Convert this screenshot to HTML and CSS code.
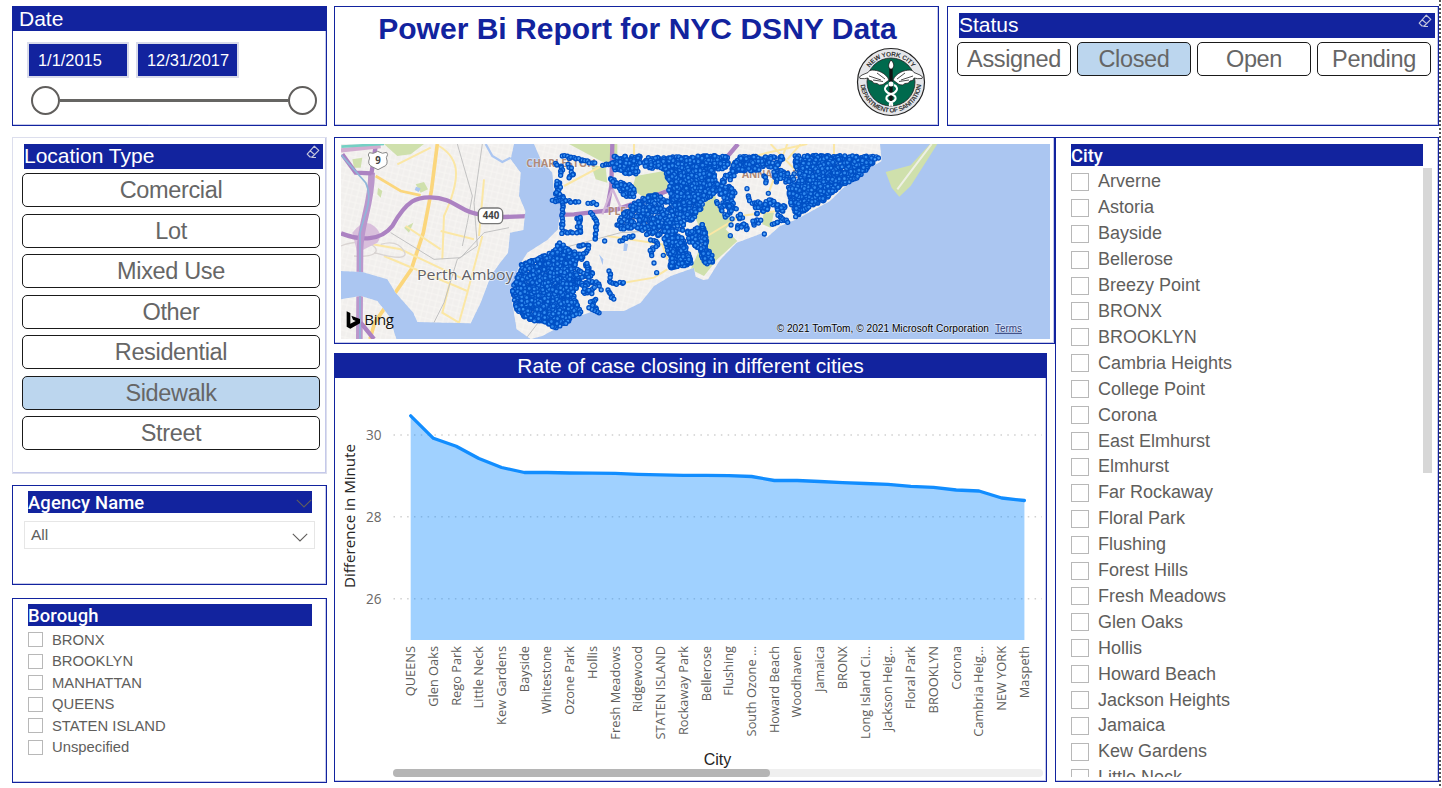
FILE: index.html
```html
<!DOCTYPE html>
<html lang="en">
<head>
<meta charset="utf-8">
<title>Power Bi Report for NYC DSNY Data</title>
<link rel="stylesheet" href="styles.css">
</head>
<body>
<svg class="defs" width="0" height="0">
  <symbol id="eraser" viewBox="0 0 14 14">
    <path d="M8.3 1.2 12.8 5.4 6.2 12 4 12 1.2 9.2Z M4.2 5.8 8.8 9.9 M5.5 12.5H10" fill="none" stroke="#c3c5dc" stroke-width="1.2" stroke-linejoin="round"/>
  </symbol>
  <symbol id="chevron" viewBox="0 0 16 9">
    <path d="M.8 .8 8 8 15.2 .8" fill="none" stroke="#605e5c" stroke-width="1.1"/>
  </symbol>
</svg>
<div class="report">
  <div class="top">
    <section class="card date">
      <h2 class="bar bar-date">Date</h2>
      <div class="dates"><span class="date-box">1/1/2015</span><span class="date-box end">12/31/2017</span></div>
      <div class="slider"><i class="knob"></i><i class="track"></i><i class="knob"></i></div>
    </section>
    <section class="card title">
      <h1>Power Bi Report for NYC DSNY Data</h1>
      <svg class="seal" viewBox="-35 -35 70 70">
        <defs>
          <path id="arcTop" d="M-25.6 0A25.6 25.6 0 0 1 25.6 0"/>
          <path id="arcBottom" d="M-30.4 0A30.4 30.4 0 0 0 30.4 0"/>
        </defs>
        <circle r="33.5" fill="#e6e7ea" stroke="#222" stroke-width="1.2"/>
        <circle r="24" fill="#006a4d" stroke="#222" stroke-width=".8"/>
        <text class="seal-text"><textPath href="#arcTop" startOffset="50%" text-anchor="middle" textLength="50">NEW YORK CITY</textPath></text>
        <text class="seal-text"><textPath href="#arcBottom" startOffset="50%" text-anchor="middle" textLength="90">DEPARTMENT OF SANITATION</textPath></text>
        <g fill="#fff" stroke="#222" stroke-width=".8" stroke-linejoin="round">
          <path d="M-2-2C-5-9-13-12-19-12Q-22-12-23-9.500L-29-7Q-33-5-31-3.500Q-26-3-23-4Q-23-1-19-1Q-18 2-14 1.500Q-12 4-8 2.500Z"/>
          <path d="M2-2C5-9 13-12 19-12Q22-12 23-9.500L29-7Q33-5 31-3.500Q26-3 23-4Q23-1 19-1Q18 2 14 1.500Q12 4 8 2.500Z"/>
          <path d="M-22-6-10-2M-18-2-8-.500M-14-9-6-3M22-6 10-2M18-2 8-.500M14-9 6-3" fill="none"/>
        </g>
        <path d="M0-15V24" stroke="#111" stroke-width="3.400"/>
        <path d="M0-22C4-18 3-15 1-13H-1C-3-15-3-18 0-22Z" fill="#fff" stroke="#111" stroke-width=".8"/>
        <path d="M-3 3C-9 6-5 11 0 12C6 14 6 18 1 20Q-2 21-1 24M3 3C9 6 5 11 0 12C-6 14-6 18-1 20Q2 21 1 24" fill="none" stroke="#fff" stroke-width="2"/>
        <circle cy="2" r="2.500" fill="#fff"/>
      </svg>
    </section>
    <section class="card status">
      <h2 class="bar bar-slicer">Status<svg class="eraser"><use href="#eraser"/></svg></h2>
      <div class="status-row"><button class="pick">Assigned</button><button class="pick on">Closed</button><button class="pick">Open</button><button class="pick">Pending</button></div>
    </section>
  </div>
  <div class="main">
    <div class="left">
      <section class="card location">
        <h2 class="bar bar-slicer">Location Type<svg class="eraser"><use href="#eraser"/></svg></h2>
        <div class="picks">
          <button class="pick">Comercial</button><button class="pick">Lot</button><button class="pick">Mixed Use</button><button class="pick">Other</button><button class="pick">Residential</button><button class="pick on">Sidewalk</button><button class="pick">Street</button>
        </div>
      </section>
      <section class="card agency">
        <h2 class="bar bar-din">Agency Name<svg class="chev"><use href="#chevron"/></svg></h2>
        <div class="select">All<svg class="chev"><use href="#chevron"/></svg></div>
      </section>
      <section class="card borough">
        <h2 class="bar bar-din">Borough</h2>
        <ul class="checks small"><li>BRONX</li><li>BROOKLYN</li><li>MANHATTAN</li><li>QUEENS</li><li>STATEN ISLAND</li><li>Unspecified</li></ul>
      </section>
    </div>
    <div class="center">
      <section class="card map">
        <svg class="map-svg" viewBox="21 24 2127 585" preserveAspectRatio="none">
          <defs>
            <clipPath id="land">
              <path id="west" d="M21 24H540L530 70 560 110 555 180 574 225 568 282 528 290 522 350 495 385 470 420 440 500 410 562 250 558 238 530 185 470 160 430 85 408 21 405Z"/>
              <path id="southwest" d="M21 490 80 480 130 495 165 540 187 609H21Z"/>
              <path id="island" d="M600 24 620 70 655 110 660 170 682 190 672 280 640 312 580 350 555 390 530 470 548 580 590 609 625 600 680 570 720 545 780 525 870 525 920 500 960 450 1010 420 1080 395 1085 422 1108 432 1122 430 1158 372 1208 320 1288 290 1298 305 1338 270 1388 250 1488 195 1528 155 1568 130 1608 95 1643 75 1638 24Z"/>
            </clipPath>
            <pattern id="streets" width="34" height="38" patternUnits="userSpaceOnUse" patternTransform="rotate(14)">
              <path d="M0 8H34M0 27H34M9 0V38M25 0V38" stroke="#f8f6f4" stroke-width="2.500" fill="none"/>
            </pattern>
          </defs>
          <rect x="21" y="24" width="2127" height="585" fill="#abc6f1"/>
          <g clip-path="url(#land)">
            <rect x="21" y="24" width="2127" height="585" fill="#f1efed"/>
            <rect x="21" y="24" width="2127" height="585" fill="url(#streets)"/>
            <g fill="#cfe0ac">
              <path d="M150 24H270L230 55 190 60Z"/><path d="M245 145 270 138 282 160 260 170Z"/><path d="M210 275 238 260 225 290Z"/><path d="M55 70 85 65 80 95 60 95Z"/><path d="M132 155 145 165 140 185 130 175Z"/>
              <path d="M705 24H850V90L800 75Z"/><path d="M770 85 815 95 820 140 785 130Z"/><path d="M905 120 990 105 1005 155 930 185 895 160Z"/>
              <path d="M1080 235 1140 170 1165 235 1200 250 1175 280 1210 315 1150 370 1110 420 1070 400 1110 310Z"/>
              <path d="M1290 220 1320 230 1310 275 1285 265Z"/>
            </g>
            <path d="M795 355 808 370 806 388ZM870 320 882 325 878 345 868 345ZM246 152 260 157 254 168 242 162Z" fill="#abc6f1"/>
            <g fill="none" stroke="#fbe7a5" stroke-width="6">
              <path d="M310 24 292 165 268 290 232 400 122 560 108 609" stroke="#fbd67c" stroke-width="11"/>
              <path d="M125 120 200 165 260 178" stroke="#fbd67c" stroke-width="8"/>
              <path d="M315 30Q365 60 366 110T330 240L325 370"/>
              <path d="M190 85 290 35M320 285 420 310M215 270 320 340M150 360 400 465M445 300 400 470 375 560M350 430 325 530 375 560M90 320 200 340 390 430M450 130 435 300"/>
              <path d="M860 442 960 425 1000 400M820 300 985 325 1000 370M690 150 840 70M900 24V75M1120 300 1220 240 1330 225M1360 24 1300 180M1400 24 1360 70M1180 85 1300 50 1420 24M1500 24V60M1310 24 1410 130"/>
            </g>
            <g fill="none" stroke="#c2c2c2" stroke-width="3">
              <path d="M370 24 415 180 400 260 385 330M445 24 420 200 430 330 370 370 330 500 275 609M170 290 300 370 380 365 450 290 525 275"/>
              <path d="M690 335 860 290 950 285M575 609 620 550"/>
            </g>
            <path d="M20 330C120 290 180 370 60 360M140 325Q190 310 210 345T120 350" fill="none" stroke="#d9d4d2" stroke-width="4"/>
            <path d="M55 290Q90 245 120 270T130 320L70 350Z" fill="#d9bfdc"/>
            <g fill="none" stroke="#ac82c2" stroke-width="13">
              <path d="M21 292C80 315 140 315 175 270C220 190 250 183 290 184C360 185 380 230 435 235L510 243L720 235 850 220 920 195 1000 165 1110 122 1160 85 1212 24"/>
              <path d="M76 609 78 340C80 260 112 210 113 110" stroke="#bb97cc" stroke-width="20"/>
              <path d="M112 115 125 30M25 55 65 110 112 112M80 560 120 609M835 24 832 150 820 215"/>
              <path d="M21 43 140 30" stroke="#d2add0"/>
            </g>
            <path d="M22 57 95 140Q115 180 92 240L78 290V609" fill="none" stroke="#8fb6d9" stroke-width="5"/>
            <path d="M834 160 805 235M836 160 865 225" stroke="#d2b4d8" stroke-width="7"/>
            <path d="M22 32 150 24" stroke="#74d0c4" stroke-width="8"/>
          </g>
          <path d="M455 24 475 60 505 78 530 65" fill="none" stroke="#abc6f1" stroke-width="7"/>
          <path d="M1788 24 1730 88 1655 108 1673 155 1696 182 1730 150 1810 24Z" fill="#cfe0ac"/>
          <path d="M1793 24 1735 100 1690 160" fill="none" stroke="#eef0e4" stroke-width="6"/>
          <path d="M106 50Q118 56 131 46Q146 56 158 49Q164 55 157 65Q165 88 147 93L132 101 116 93Q98 86 107 66Q99 56 106 50Z" fill="#fff" stroke="#888" stroke-width="3"/>
          <rect x="433" y="216" width="73" height="47" rx="14" fill="#fff" stroke="#777" stroke-width="4"/>
          <g class="map-label">
            <text x="124" y="85" class="shield">9</text>
            <text x="446" y="250" class="shield" textLength="50" lengthAdjust="spacingAndGlyphs">440</text>
            <text x="577" y="93" class="place" textLength="208">CHARLESTON</text>
            <text x="822" y="238" class="place">PLEASANT</text>
            <text x="850" y="270" class="place">PLAINS</text>
            <text x="1224" y="127" class="place" textLength="168">ANNADALE</text>
            <text x="249" y="431" class="town" textLength="290" lengthAdjust="spacingAndGlyphs">Perth Amboy</text>
          </g>
          <g id="pins"></g>
          <path d="M38 526 49 531V563L65 555 57 551 52 539 78 549V562L49 578 38 572Z" fill="#000"/>
          <text x="91" y="568" class="bing" textLength="89">Bing</text>
          <text x="1328" y="588" class="legal" textLength="637" lengthAdjust="spacingAndGlyphs">© 2021 TomTom, © 2021 Microsoft Corporation</text>
          <text x="1983" y="588" class="legal terms" textLength="81" lengthAdjust="spacingAndGlyphs">Terms</text>
          <path d="M1983 592H2064" stroke="#2d3b77" stroke-width="3"/>
        </svg>
      </section>
      <section class="card chart">
        <h2 class="bar bar-chart">Rate of case closing in different cities</h2>
        <svg class="chart-svg" viewBox="335 378 711 390">
          <g class="grid"><path d="M393.500 435H1042M393.500 516.800H1042M393.500 598.700H1042"/></g>
          <g class="ticks"><text x="381.500" y="439.800">30</text><text x="381.500" y="521.600">28</text><text x="381.500" y="603.500">26</text></g>
          <text class="axis-y" transform="translate(354.500 588) rotate(-90)" textLength="144" lengthAdjust="spacingAndGlyphs">Difference in Minute</text>
          <g id="series"></g>
          <text class="axis-x" x="717.500" y="765">City</text>
        </svg>
        <div class="hscroll"><i></i></div>
      </section>
    </div>
    <section class="card city">
      <h2 class="bar bar-din">City</h2>
      <div class="city-body">
        <ul class="checks"><li>Arverne</li><li>Astoria</li><li>Bayside</li><li>Bellerose</li><li>Breezy Point</li><li>BRONX</li><li>BROOKLYN</li><li>Cambria Heights</li><li>College Point</li><li>Corona</li><li>East Elmhurst</li><li>Elmhurst</li><li>Far Rockaway</li><li>Floral Park</li><li>Flushing</li><li>Forest Hills</li><li>Fresh Meadows</li><li>Glen Oaks</li><li>Hollis</li><li>Howard Beach</li><li>Jackson Heights</li><li>Jamaica</li><li>Kew Gardens</li><li>Little Neck</li></ul>
        <i class="vscroll"></i>
      </div>
    </section>
  </div>
  <i class="page-edge"></i>
</div>
<script src="report.js"></script>
</body>
</html>
```
FILE: styles.css
```css
*, *::before { box-sizing: border-box; }
body { margin: 0; background: #fff; font-family: "Liberation Sans", Arial, sans-serif; color: #605e5c; }
h1, h2, ul { margin: 0; padding: 0; font-weight: normal; }
svg { display: block; }
.defs { position: absolute; }
.report { position: relative; width: 1442px; height: 788px; overflow: hidden; padding: 6px 3px 5px 12px; }
.page-edge { position: absolute; top: 0; right: 1px; width: 2px; height: 788px; background: repeating-linear-gradient(#555 0 2px, #fff 2px 4px); }

.card { border: 1px solid #12239e; background: #fff; box-shadow: inset -1px -1px 0 #c5c9ea; }
.bar { background: #12239e; color: #fff; white-space: nowrap; }
.top { display: flex; height: 120px; }
.main { display: flex; margin-top: 11px; height: 645px; }

.date { width: 315px; margin-right: 7px; }
.bar-date { height: 24px; padding-left: 6px; font-size: 21px; line-height: 24px; }
.dates { display: flex; gap: 7px; padding: 11px 0 0 14px; }
.date-box { width: 102px; height: 36px; border: 2px solid #d9dbea; background: #12239e; color: #fff; font-size: 16.4px; line-height: 33px; padding-left: 9px; }
.date-box.end { width: 103px; }
.slider { display: flex; align-items: center; padding: 8px 0 0 18px; }
.knob { width: 29px; height: 29px; border: 2px solid #605e5c; border-radius: 50%; }
.track { width: 228px; height: 3px; background: #666563; }

.title { width: 605px; margin-right: 8px; }
.title h1 { padding: 4px 0 0 2px; height: 40px; line-height: 36px; font-size: 30.05px; font-weight: bold; color: #12239e; text-align: center; white-space: nowrap; }
.seal { width: 70px; height: 70px; margin: 0 0 0 521px; }
.seal-text { font-size: 6.5px; font-weight: bold; fill: #333; }

.status { flex: 1; padding: 6px 3px 0 9px; }
.bar-slicer { display: flex; justify-content: space-between; height: 25px; font-size: 21px; line-height: 23px; }
.eraser { width: 14px; height: 14px; margin: 1px 3px 0 0; }
.status .bar-slicer { margin-left: 2px; }
.status-row { display: flex; gap: 6px; margin-top: 4px; padding-right: 4px; }
.status-row .pick { flex: 1; }
.pick { height: 34px; padding: 0; border: 1px solid #1a1a1a; border-radius: 5px; background: #fff; color: #666; font: 23.5px/30px "Liberation Sans", Arial, sans-serif; letter-spacing: -.35px; }
.pick.on { background: #bcd6ee; }

.left { width: 315px; margin-right: 7px; }
.location { height: 337px; border-color: #dcdeed; padding: 6px 5px 0 9px; }
.location .bar-slicer { margin-left: 2px; width: 299px; }
.picks { display: flex; flex-direction: column; gap: 6.5px; margin-top: 4px; width: 298px; }
.agency { height: 100px; margin-top: 11px; padding: 5px 12px 0 11px; }
.bar-din { font-family: Roboto, sans-serif; font-weight: 500; font-size: 18.4px; letter-spacing: .15px; line-height: 24px; height: 22px; }
.agency .bar-din, .borough .bar-din { display: flex; justify-content: space-between; margin-left: 4px; width: 284px; }
.chev { width: 16px; height: 9px; }
.agency .bar-din .chev { margin-top: 8px; }
.select { display: flex; justify-content: space-between; align-items: center; width: 291px; height: 28px; margin-top: 8px; padding: 0 6px; border: 1px solid #e6e6e6; font-size: 15.5px; line-height: 28px; }
.select .chev { margin-top: 4px; }
.borough { height: 185px; margin-top: 13px; padding: 5px 0 0 11px; }

.checks { list-style: none; }
.checks li { display: flex; align-items: center; height: 25.91px; font-size: 18px; white-space: nowrap; }
.checks li::before { content: ""; width: 18px; height: 18px; margin-right: 9px; border: 1px solid #b8b8b8; }
.checks.small { padding: 3px 0 0 4px; }
.checks.small li { height: 21.5px; font-size: 14.8px; }
.checks.small li::before { width: 15px; height: 15px; }

.center { width: 721px; }
.map { height: 207px; padding: 6px 0 0 6px; }
.map-svg { width: 709px; height: 195px; }
.map-label text { paint-order: stroke; stroke: #fff; stroke-width: 5px; stroke-opacity: .7; }
.map-label .shield { font: bold 29px "Open Sans", sans-serif; fill: #444; stroke: none; }
.map-label .place { font: bold 31px "Open Sans", sans-serif; fill: #b08a78; stroke-opacity: .4; }
.map-label .town { font: 44px "Open Sans", sans-serif; fill: #605f66; }
.bing { font: 45px "Open Sans", sans-serif; fill: #111; }
.legal { font-size: 30px; fill: #000; paint-order: stroke; stroke: #fff; stroke-width: 4px; stroke-opacity: .5; }
.terms { fill: #2d3b77; }
.pin { fill: #3d98f7; stroke: #0050c5; stroke-width: 4px; fill-opacity: .8; }

.chart { width: 713px; height: 429px; margin-top: 9px; }
.bar-chart { height: 24px; font-size: 21px; line-height: 23px; text-align: center; }
.chart-svg { width: 711px; height: 390px; font-family: "Open Sans", sans-serif; }
.grid path { stroke: #d0d0d0; stroke-width: 1.5; stroke-dasharray: 1.500 5.320; }
.ticks text { font-size: 13.6px; text-anchor: end; fill: #6b6967; }
.axis-y { font-size: 14.6px; fill: #252423; }
.axis-x { font: 16px "Liberation Sans", Arial, sans-serif; fill: #252423; text-anchor: middle; }
.tick { font-size: 12.8px; fill: #605e5c; text-anchor: end; }
.area { fill: #118dff; fill-opacity: .4; }
.line { fill: none; stroke: #118dff; stroke-width: 3.3; stroke-linejoin: round; stroke-linecap: round; }
.hscroll { width: 650px; height: 8px; margin: 1px 0 0 58px; border-radius: 4px; background: #efefef; }
.hscroll i { display: block; width: 377px; height: 8px; border-radius: 4px; background: #b5b5b5; }

.city { flex: 1; padding: 6px 0 4px 15px; overflow: hidden; }
.city .bar-din { width: 352px; letter-spacing: 0; }
.city-body { display: flex; justify-content: space-between; height: 611px; padding-right: 6px; overflow: hidden; }
.city .checks { padding-top: 3px; }
.vscroll { width: 9px; height: 305px; margin-top: 2px; background: #d7d7d7; }
```
FILE: report.js
```js
const NS = "http://www.w3.org/2000/svg";
function add(parent, tag, attrs, text) {
  const el = document.createElementNS(NS, tag);
  for (const k in attrs) el.setAttribute(k, attrs[k]);
  if (text) el.textContent = text;
  parent.appendChild(el);
  return el;
}

// Area chart
const data = [["QUEENS",415.8],["Glen Oaks",438.3],["Rego Park",446.3],["Little Neck",458.5],["Kew Gardens",467.5],["Bayside",472.5],["Whitestone",472.5],["Ozone Park",473],["Hollis",473.2],["Fresh Meadows",473.3],["Ridgewood",474.3],["STATEN ISLAND",474.8],["Rockaway Park",475.3],["Bellerose",475.4],["Flushing",475.6],["South Ozone ...",476.5],["Howard Beach",480.5],["Woodhaven",480.5],["Jamaica",481.5],["BRONX",482.7],["Long Island Ci...",483.5],["Jackson Heig...",484.3],["Floral Park",486.3],["BROOKLYN",487.3],["Corona",490],["Cambria Heig...",491],["NEW YORK",498],["Maspeth",500.5]];
const step = 22.73, x0 = 410.7;
const series = document.getElementById("series");
const pts = data.map((d, i) => (x0 + i * step).toFixed(1) + "," + d[1]);
add(series, "polygon", { class: "area", points: pts.join(" ") + " 1024.4,640 410.7,640" });
add(series, "polyline", { class: "line", points: pts.join(" ") });
data.forEach((d, i) => add(series, "text", { class: "tick", transform: `translate(${(x0 + i * step + 4.3).toFixed(1)} 646) rotate(-90)` }, d[0]));

// Map pins, with a fixed seed so the scatter is stable
let seed = 7;
const rnd = () => (seed = (seed * 16807) % 2147483647) / 2147483647;
const pins = document.getElementById("pins");
const pin = (x, y) => add(pins, "circle", { class: "pin", cx: x.toFixed(1), cy: y.toFixed(1), r: 6 });
function inside(x, y, p) {
  let c = false;
  for (let i = 0, j = p.length - 1; i < p.length; j = i++) {
    const [a, b] = p[i], [d, e] = p[j];
    if ((b > y) !== (e > y) && x < (d - a) * (y - b) / (e - b) + a) c = !c;
  }
  return c;
}
const parse = s => s.split(" ").map(q => q.split(",").map(Number));
const areas = [
  ["533,460 560,400 562,385 600,372 655,347 675,320 740,355 722,400 742,440 715,470 738,520 700,560 668,578 620,555 582,555 548,520", 30],
  ["840,60 920,60 915,110 890,120 840,100", 32],
  ["930,65 1180,58 1185,88 1140,110 1152,165 1110,195 1090,190 1060,210 1030,160 1002,130 992,100 930,95", 32],
  ["840,128 880,140 903,160 898,190 870,178 840,148", 36],
  ["905,195 960,172 1000,190 1060,200 1090,240 1050,265 1045,300 1075,385 1010,398 1000,345 985,300 940,298 905,280 842,285 845,265 870,230", 55],
  ["1010,320 1045,310 1072,385 1008,398", 38],
  ["1000,150 1110,150 1120,190 1080,250 1030,240", 45],
  ["1060,285 1105,265 1120,305 1135,350 1138,380 1112,388 1095,340 1062,318", 40],
  ["1148,145 1180,110 1215,62 1345,60 1352,78 1330,92 1260,105 1215,105 1180,140 1205,170 1195,225 1165,210", 48],
  ["1380,58 1640,60 1610,88 1570,128 1520,148 1480,190 1430,210 1390,240 1370,205 1362,150 1400,130 1385,90", 30],
  ["1315,78 1350,95 1395,120 1380,140 1320,138", 85],
  ["1263,208 1298,185 1355,212 1343,250 1315,222 1263,235", 70],
  ["1175,258 1225,232 1245,285 1210,285", 200],
  ["1253,252 1282,246 1280,276 1260,276", 90],
  ["722,245 740,238 740,292 722,290", 60],
  ["668,135 688,135 688,190 662,190", 60]
];
for (const [s, k] of areas) {
  const p = parse(s), xs = p.map(q => q[0]), ys = p.map(q => q[1]);
  const l = Math.min(...xs), t = Math.min(...ys), w = Math.max(...xs) - l, h = Math.max(...ys) - t;
  for (let n = w * h / k; n > 0; n--) {
    const x = l + rnd() * w, y = t + rnd() * h;
    if (inside(x, y, p)) pin(x, y);
  }
}
const chains = [
  "685,60 740,72 780,80", "806,88 838,80", "665,82 685,92 680,120", "702,85 718,112 705,128", "655,193 735,200", "762,202 785,203",
  "685,200 685,290", "770,230 790,262 782,312", "695,288 715,290", "812,315", "858,315 895,298", "735,330 765,330 745,370 700,345",
  "755,385 775,415 742,425", "755,440 790,440 800,460", "752,472 782,455", "825,405 830,440 870,443", "822,462 838,490", "785,490 770,500 793,527 765,518", "740,528 725,535",
  "830,128 850,150", "950,312 972,322 950,345 955,358", "960,381", "968,410", "988,358", "1148,197 1175,240 1205,215", "1189,299", "1291,294",
  "1243,180 1253,200 1280,198", "1303,172", "1239,158", "1315,265 1345,250 1362,258", "1385,242", "1105,266", "1165,98 1178,88", "730,400 760,420 760,385", "770,420 745,470", "735,440 770,470", "1290,120 1295,138"
];
for (const s of chains) {
  const p = parse(s);
  pin(...p[0]);
  for (let i = 1; i < p.length; i++) {
    const [a, b] = p[i - 1], [c, d] = p[i], n = Math.max(1, Math.round(Math.hypot(c - a, d - b) / 7));
    for (let j = 1; j <= n; j++) pin(a + (c - a) * j / n + (rnd() - .5) * 7, b + (d - b) * j / n + (rnd() - .5) * 7);
  }
}
```
